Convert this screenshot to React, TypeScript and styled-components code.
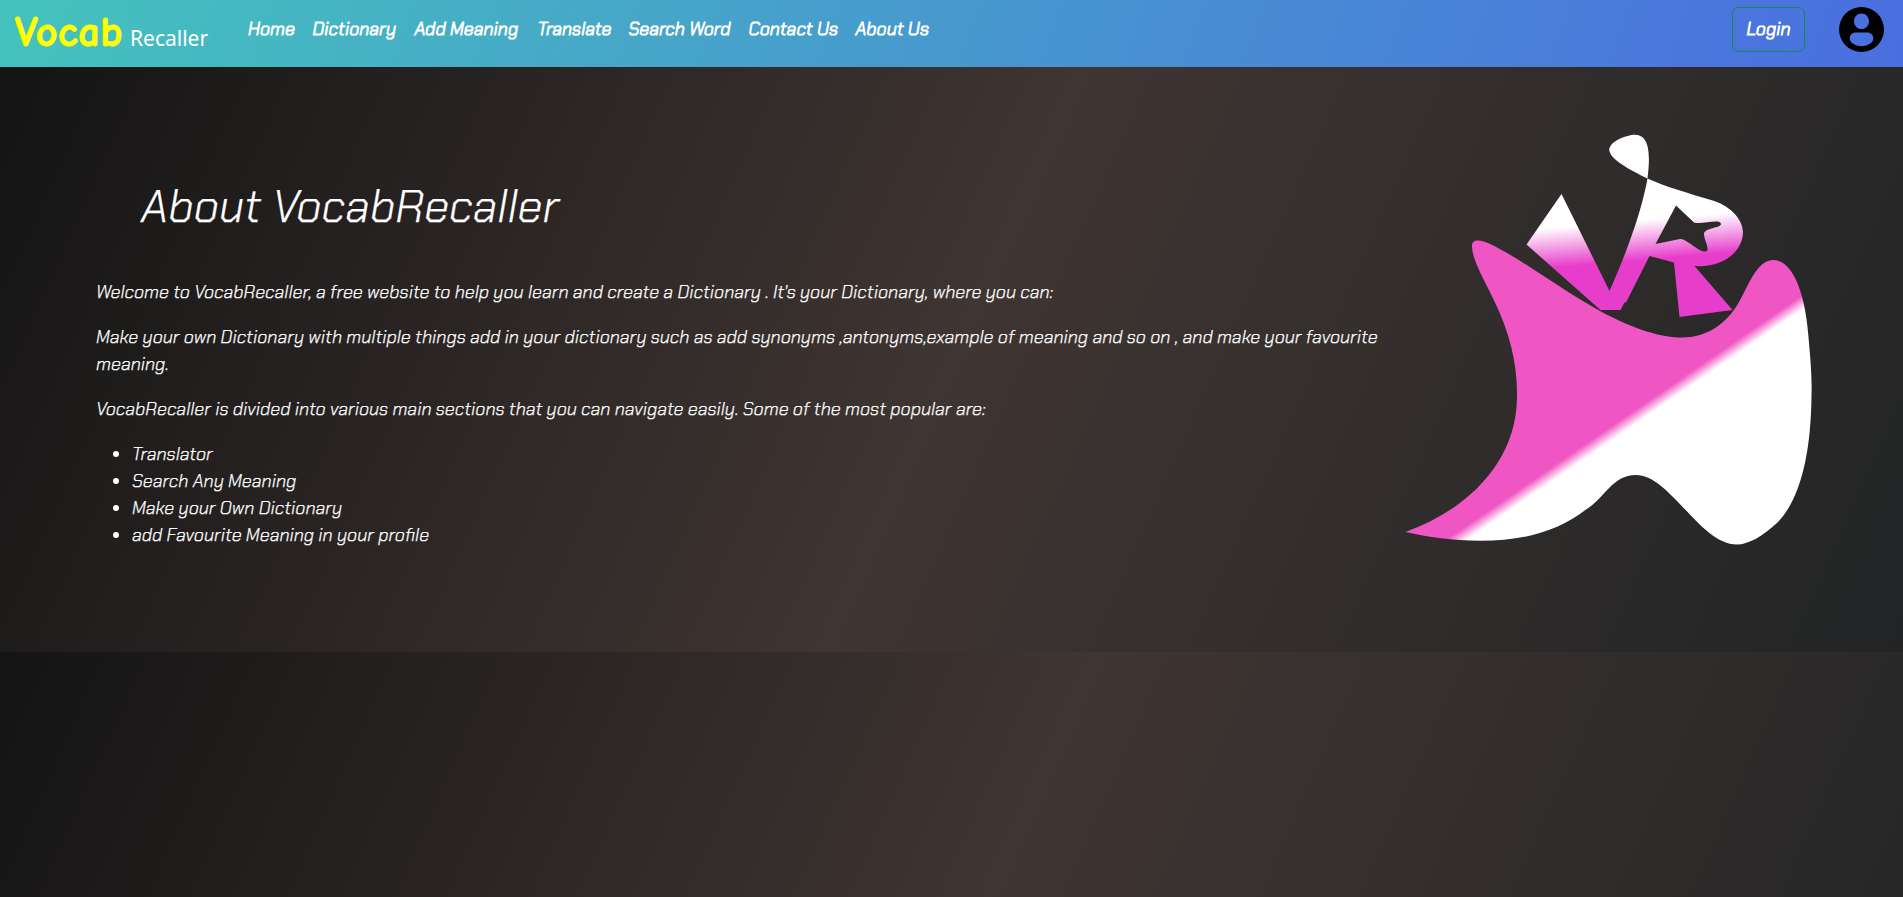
import React from "react";
import styled, { createGlobalStyle } from "styled-components";

const GlobalStyle = createGlobalStyle`
  *, *::before, *::after { box-sizing: border-box; }
  body {
    margin: 0;
    min-height: 897px;
    background: #151515;
    color: #fff;
    font-family: "Chakra Petch", Roboto, "Liberation Sans", sans-serif;
    overflow: hidden;
  }
`;

const dusk = "linear-gradient(114deg, #141414 0%, #3f3532 50%, #222425 100%)";

const Page = styled.div`
  display: flex;
  flex-direction: column;
  height: 897px;
`;

const Navbar = styled.nav`
  display: flex;
  align-items: center;
  height: 67px;
  flex: none;
  padding: 0 19px 0 15px;
  background: linear-gradient(110deg, #44c3bd 0%, #4a6ee0 100%);
`;

const Brand = styled.a`
  display: flex;
  align-items: baseline;
  width: 233px;
  padding-bottom: 1px;
  white-space: nowrap;
`;

const BrandMain = styled.span`
  display: inline-block;
  width: 115px;
  font: 700 42px/60px "Comic Neue", "Comic Sans MS", Lato, sans-serif;
  letter-spacing: 0.6px;
  -webkit-text-stroke: 1px #ffff00;
  color: #ffff00;
`;

const BrandSub = styled.span`
  font: 400 21px/30px "Noto Sans", sans-serif;
`;

const Line = styled.span`
  display: block;
  white-space: nowrap;
`;

const NavLinks = styled.div`
  display: flex;
  gap: 18px;
  flex: 1;
  padding-bottom: 8px;
`;

const NavLink = styled.span<{ $w: number }>`
  width: ${(p) => p.$w}px;
  white-space: nowrap;
  font-size: 18px;
  font-style: italic;
  font-weight: 300;
  -webkit-text-stroke: 0.9px #fff;
  line-height: 27px;
`;

const LoginButton = styled.button`
  width: 73px;
  height: 45px;
  margin: 0 34px 9px 0;
  padding: 0;
  border: 1px solid #198754;
  border-radius: 6px;
  background: transparent;
  color: #fff;
  font: italic 300 18px/27px "Chakra Petch", Roboto, sans-serif;
  -webkit-text-stroke: 0.9px #fff;
`;

const Avatar = styled.svg`
  width: 45px;
  height: 45px;
  margin-bottom: 8px;
`;

const About = styled.section`
  display: flex;
  flex: none;
  height: 585px;
  background: ${dusk};
`;

const Copy = styled.div`
  width: 1400px;
  padding: 110px 0 0 96px;
  font-size: 18px;
  font-style: italic;
  font-weight: 300;
  -webkit-text-stroke: 0.25px #fff;
  line-height: 27px;
`;

const Title = styled.h1`
  margin: 0 0 42px 45px;
  font-size: 45px;
  font-weight: 300;
  line-height: 60px;
`;

const Paragraph = styled.div`
  margin-bottom: 18px;
`;

const Topics = styled.ul`
  margin: 0;
  padding-left: 36px;
`;

const Artwork = styled.svg`
  width: 440px;
  height: 440px;
  margin: 53px 0 0 -10px;
`;

const Backdrop = styled.div`
  flex: 1;
  background: ${dusk};
  background-size: 100% 652px;
`;

const links: [string, number][] = [
  ["Home", 46.5], ["Dictionary", 84], ["Add Meaning", 105], ["Translate", 73],
  ["Search Word", 102], ["Contact Us", 89], ["About Us", 75],
];

export default function App() {
  return (
    <Page>
      <GlobalStyle />
      <Navbar>
        <Brand><BrandMain>Vocab</BrandMain><BrandSub>Recaller</BrandSub></Brand>
        <NavLinks>
          {links.map(([t, w]) => <NavLink key={t} $w={w}>{t}</NavLink>)}
        </NavLinks>
        <LoginButton>Login</LoginButton>
        <Avatar viewBox="0 0 45 45">
          <path fillRule="evenodd" d="M22.5 0a22.5 22.5 0 1 1 0 45a22.5 22.5 0 1 1 0-45ZM22.5 6.500c-4.300 0-7.500 3.500-7.500 7.700s3.200 7.800 7.500 7.800 7.500-3.600 7.500-7.800-3.200-7.700-7.500-7.700ZM17 25.500c-4 0-6.300 2.500-6.300 6 0 4 5.500 7.700 11.800 7.700s11.800-3.700 11.800-7.700c0-3.500-2.300-6-6.300-6Z" />
        </Avatar>
      </Navbar>
      <About>
        <Copy>
          <Title>About VocabRecaller</Title>
          <Paragraph><Line>Welcome to VocabRecaller, a free website to help you learn and create a Dictionary . It's your Dictionary, where you can:</Line></Paragraph>
          <Paragraph>
            <Line>Make your own Dictionary with multiple things add in your dictionary such as add synonyms ,antonyms,example of meaning and so on , and make your favourite</Line>
            <Line>meaning.</Line>
          </Paragraph>
          <Paragraph><Line>VocabRecaller is divided into various main sections that you can navigate easily. Some of the most popular are:</Line></Paragraph>
          <Topics>
            <li>Translator</li>
            <li>Search Any Meaning</li>
            <li>Make your Own Dictionary</li>
            <li>add Favourite Meaning in your profile</li>
          </Topics>
        </Copy>
        <Artwork viewBox="0 0 440 440">
          <defs>
            <linearGradient id="cape" gradientUnits="userSpaceOnUse" x1="57" y1="419" x2="63.8" y2="428.9">
              <stop offset="0" stopColor="#f056c3" /><stop offset="1" stopColor="#fff" />
            </linearGradient>
            <linearGradient id="mark" gradientUnits="userSpaceOnUse" x1="170" y1="107" x2="173.4" y2="147">
              <stop offset="0" stopColor="#fff" /><stop offset="1" stopColor="#e73dcb" />
            </linearGradient>
          </defs>
          <path fill="url(#cape)" d="M82 127C81 119 90 119 100 124C130 138 170 169 210 191C245 210 272 217.500 292 217.500C316 217.500 334 205 346 187C358 169 365 140 384 140C403 141 416 173 419 223C421 245 422 262 421.500 275C421 335 410 379 388 402C372 417 358 424.500 347 424.500C310 424.500 280 355 246 355C222 355 215 378 196 389.500C168 411 135 420.700 90 420.700C63 420.500 38 417 15.500 412C74 391 126 345 127 278C129 200 83 155 82 127Z" />
          <path fill="url(#mark)" fillRule="evenodd" d="M171.500 74L219.500 171C239 127 252 89 257.500 58.500C260 38 261 15 245 14.700C238 14.500 219 21 219.300 30C220 39 238 49 257.500 58.500C276 67 298 73 321 80C339 85 352.500 98 353 112C353 130 335 148 304.500 146L342.500 190L289.500 197L284 142.500L259.500 136L236 182.500L234.500 182.500L230.500 190L210.500 190L136.500 124.500ZM286 85.500L265.500 124L290 119C296 118 308 132 315.500 131.500C321 131 314 120 314 114C314 108 331 108 331 104C330 98 312 105 304 102.500Z" />
        </Artwork>
      </About>
      <Backdrop />
    </Page>
  );
}
